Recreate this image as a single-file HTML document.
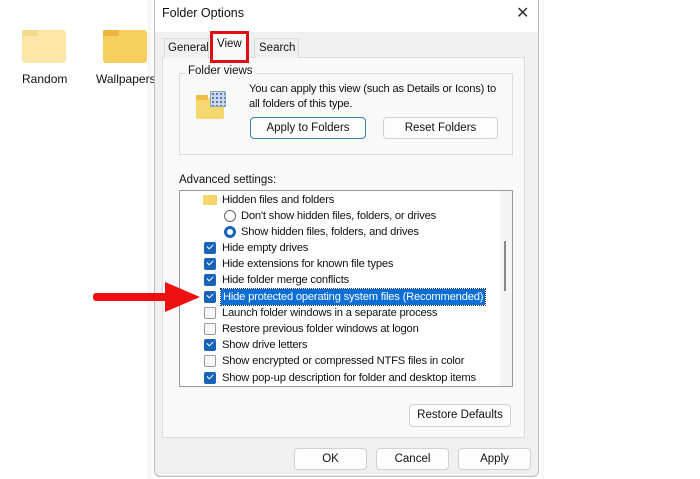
<!DOCTYPE html>
<html><head><style>
*{box-sizing:border-box;margin:0;padding:0}
body{width:700px;height:479px;background:#fff;font-family:"Liberation Sans",sans-serif;font-size:11px;color:#111;position:relative;overflow:hidden}
.a{position:absolute}
.btn{position:absolute;background:#fdfdfd;border:1px solid #d0d0d0;border-radius:4px;text-align:center;font-size:11.5px}
.row{position:absolute;left:0;height:16px;line-height:16px;white-space:nowrap}
.cb{position:absolute;width:12px;height:12px;border-radius:2px;top:2px}
.on{background:#1a64b8}
.on::after{content:"";position:absolute;left:3px;top:2px;width:5px;height:3px;border-left:1.3px solid #fff;border-bottom:1.3px solid #fff;transform:rotate(-45deg)}
.off{border:1px solid #999;background:#fafafa}
</style></head><body>
<div class="a" style="left:22px;top:30px;width:44px;height:33px;background:#fbe6a8;border-radius:3px"></div>
<div class="a" style="left:22px;top:30px;width:16px;height:6px;background:#f5d98a;border-radius:2px"></div>
<div class="a" style="left:22px;top:72px;font-size:12px">Random</div>
<div class="a" style="left:103px;top:30px;width:44px;height:33px;background:#f6cf5e;border-radius:3px"></div>
<div class="a" style="left:103px;top:30px;width:16px;height:6px;background:#eab53a;border-radius:2px"></div>
<div class="a" style="left:96px;top:72px;font-size:12px">Wallpapers</div>
<div class="a" style="left:148px;top:0;width:396px;height:479px;background:linear-gradient(90deg,rgba(0,0,0,.05),rgba(0,0,0,0) 6px,rgba(0,0,0,0) 391px,rgba(0,0,0,.04))"></div>
<div class="a" style="left:154px;top:0;width:385px;height:477px;background:#f0f0f0;border:1px solid #bbb;border-top:none;border-radius:0 0 6px 6px"></div>
<div class="a" style="left:155px;top:0;width:383px;height:32px;background:#fff"></div>
<div class="a" style="left:162px;top:6px;font-size:12.5px">Folder Options</div>
<div class="a" style="left:516px;top:3px;font-size:16px;color:#333">✕</div>
<div class="a" style="left:162px;top:57px;width:363px;height:381px;background:#f9f9f9;border:1px solid #dcdcdc"></div>
<div class="a" style="left:164px;top:38px;width:45px;height:20px;border:1px solid #dcdcdc;border-bottom:none;background:#f0f0f0;padding:3px 0 0 3px;font-size:11.5px;overflow:hidden">General</div>
<div class="a" style="left:209px;top:33px;width:40px;height:25px;background:#f9f9f9;padding:5px 0 0 8px;font-size:11.5px">View</div>
<div class="a" style="left:210px;top:31px;width:39px;height:32px;border:3px solid #e01010"></div>
<div class="a" style="left:254px;top:38px;width:45px;height:20px;border:1px solid #dcdcdc;border-bottom:none;background:#f0f0f0;padding:3px 0 0 4px;font-size:11.5px">Search</div>
<div class="a" style="left:179px;top:73px;width:334px;height:82px;border:1px solid #dcdcdc"></div>
<div class="a" style="left:186px;top:65px;background:#f9f9f9;padding:0 2px;font-size:11.5px">Folder views</div>
<div class="a" style="left:196px;top:98px;width:28px;height:21px;background:#f7d870;border-radius:2px"></div>
<div class="a" style="left:196px;top:95px;width:12px;height:5px;background:#eebd45"></div>
<div class="a" style="left:210px;top:91px;width:16px;height:16px;background:#cfd8e8;border:1px solid #8aa;background-image:radial-gradient(#4a6ec0 1px,transparent 1.2px);background-size:4px 4px"></div>
<div class="a" style="left:249px;top:82px;font-size:11.2px;line-height:15px;letter-spacing:-0.2px">You can apply this view (such as Details or Icons) to<br>all folders of this type.</div>
<div class="btn" style="left:250px;top:117px;width:116px;height:22px;line-height:20px;border:1.5px solid #3a7fae">Apply to Folders</div>
<div class="btn" style="left:383px;top:117px;width:115px;height:22px;line-height:20px">Reset Folders</div>
<div class="a" style="left:179px;top:174px;font-size:11.5px">Advanced settings:</div>
<div class="a" style="left:179px;top:190px;width:334px;height:197px;background:#fff;border:1px solid #999;overflow:hidden">
 <div class="a" style="left:320px;top:0;width:13px;height:196px;background:#f4f4f4"></div>
 <div class="a" style="left:324px;top:50px;width:2px;height:50px;background:#888"></div>
 <div style="position:absolute;left:0;top:1px;width:320px;font-size:11.2px;letter-spacing:-0.2px">
  <div class="row" style="top:0"><span class="a" style="left:23px;top:3px;width:14px;height:10px;background:#f7d46a"></span><span class="a" style="left:42px">Hidden files and folders</span></div>
  <div class="row" style="top:16px"><span class="a" style="left:44px;top:2px;width:12px;height:12px;border:1px solid #666;border-radius:50%"></span><span class="a" style="left:61px">Don't show hidden files, folders, or drives</span></div>
  <div class="row" style="top:32px"><span class="a" style="left:44px;top:2px;width:12px;height:12px;border:3.5px solid #1a64b8;border-radius:50%"></span><span class="a" style="left:61px">Show hidden files, folders, and drives</span></div>
  <div class="row" style="top:48px"><span class="cb on" style="left:24px"></span><span class="a" style="left:42px">Hide empty drives</span></div>
  <div class="row" style="top:64px"><span class="cb on" style="left:24px"></span><span class="a" style="left:42px">Hide extensions for known file types</span></div>
  <div class="row" style="top:80px"><span class="cb on" style="left:24px"></span><span class="a" style="left:42px">Hide folder merge conflicts</span></div>
  <div class="row" style="top:97px"><span class="cb on" style="left:24px"></span><span class="a" style="left:41px;background:#0b6ed6;color:#fff;padding:0 2px;outline:1px dotted #333">Hide protected operating system files (Recommended)</span></div>
  <div class="row" style="top:113px"><span class="cb off" style="left:24px"></span><span class="a" style="left:42px">Launch folder windows in a separate process</span></div>
  <div class="row" style="top:129px"><span class="cb off" style="left:24px"></span><span class="a" style="left:42px">Restore previous folder windows at logon</span></div>
  <div class="row" style="top:145px"><span class="cb on" style="left:24px"></span><span class="a" style="left:42px">Show drive letters</span></div>
  <div class="row" style="top:161px"><span class="cb off" style="left:24px"></span><span class="a" style="left:42px">Show encrypted or compressed NTFS files in color</span></div>
  <div class="row" style="top:178px"><span class="cb on" style="left:24px"></span><span class="a" style="left:42px">Show pop-up description for folder and desktop items</span></div>
 </div>
</div>
<div class="btn" style="left:409px;top:404px;width:102px;height:23px;line-height:21px">Restore Defaults</div>
<div class="btn" style="left:294px;top:448px;width:73px;height:22px;line-height:20px">OK</div>
<div class="btn" style="left:376px;top:448px;width:73px;height:22px;line-height:20px">Cancel</div>
<div class="btn" style="left:458px;top:448px;width:73px;height:22px;line-height:20px">Apply</div>
<svg class="a" style="left:90px;top:280px" width="115" height="34"><rect x="3" y="13" width="76" height="8" rx="3" fill="#ee1111"/><polygon points="75,2 110,17 75,32" fill="#ee1111"/></svg>
</body></html>
